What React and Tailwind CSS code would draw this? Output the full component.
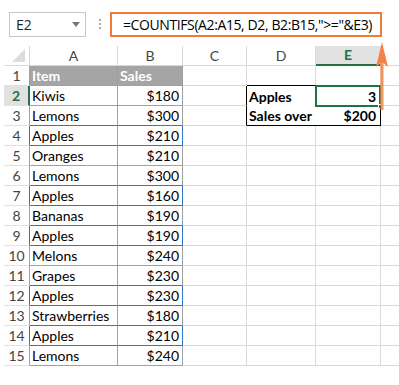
const rows = [
  ["Item", "Sales"],
  ["Kiwis", "$180"],
  ["Lemons", "$300"],
  ["Apples", "$210"],
  ["Oranges", "$210"],
  ["Lemons", "$300"],
  ["Apples", "$160"],
  ["Bananas", "$190"],
  ["Apples", "$190"],
  ["Melons", "$240"],
  ["Grapes", "$230"],
  ["Apples", "$230"],
  ["Strawberries", "$180"],
  ["Apples", "$210"],
  ["Lemons", "$240"],
];

const blueRows = [4, 7, 9, 12, 14];

const GRID = "border-[#d9d9d9]";
const TABLE = "border-[#a0a0a0]";
const BLUE = "border-[#2e75d0]";

const ColHeader = ({ label, width, active }) => (
  <div
    className={`flex h-full shrink-0 items-center justify-center border-r border-[#d9d9d9] ${width} ${
      active
        ? "border-b-2 border-b-[#217346] bg-[#e1e1e1] font-bold text-[#217346]"
        : "border-b border-b-[#d9d9d9] text-[#444]"
    }`}
  >
    {label}
  </div>
);

const SheetRow = ({ index, item, sales }) => {
  const isBlue = blueRows.includes(index);
  const nextBlue = blueRows.includes(index + 1);
  const abBottom = isBlue || nextBlue ? BLUE : TABLE;
  const isHeader = index === 1;

  return (
    <div className="flex h-[20px] whitespace-nowrap">
      <div
        className={`flex w-[26px] shrink-0 items-center justify-center border-b border-b-[#e1e1e1] ${
          index === 2
            ? "border-r-2 border-r-[#217346] bg-[#e1e1e1] font-bold text-[#217346]"
            : `border-r ${isBlue ? "border-r-[#2e75d0]" : "border-r-[#a0a0a0]"} text-[#444]`
        }`}
      >
        {index}
      </div>
      <div
        className={`flex w-[88px] shrink-0 items-end border-b border-r pb-[2px] pl-[2px] ${abBottom} border-r-[#a0a0a0] ${
          isHeader ? "bg-[#a5a5a5] font-bold text-white" : "text-black"
        }`}
      >
        {item}
      </div>
      <div
        className={`flex w-[65px] shrink-0 items-end border-b border-r pb-[2px] pr-[3px] ${abBottom} ${
          isBlue ? "border-r-[#2e75d0]" : "border-r-[#a0a0a0]"
        } ${isHeader ? "justify-start bg-[#a5a5a5] pl-[2px] font-bold text-white" : "justify-end"}`}
      >
        {sales}
      </div>
      <div
        className={`w-[64px] shrink-0 border-b border-r ${GRID} ${
          index === 2 || index === 3 ? "border-r-black" : ""
        }`}
      />
      <div
        className={`flex w-[69px] shrink-0 items-end pb-[2px] pl-[2px] font-bold ${
          index === 1
            ? "border-b border-r border-b-black border-r-[#d9d9d9]"
            : index === 2
            ? ""
            : index === 3
            ? "border-b border-b-black"
            : `border-b border-r ${GRID}`
        }`}
      >
        {index === 2 ? "Apples" : index === 3 ? "Sales over" : ""}
      </div>
      <div
        className={`relative flex w-[65px] shrink-0 items-end justify-end pb-[2px] pr-[4px] font-bold ${
          index === 1
            ? "border-b border-r border-b-black border-r-[#d9d9d9]"
            : index === 2
            ? "border-r border-r-black"
            : index === 3
            ? "border-b border-r border-black"
            : `border-b border-r ${GRID}`
        }`}
      >
        {index === 2 && (
          <>
            <div className="absolute -top-px -left-px -bottom-px right-[-1px] border-2 border-[#217346]" />
            <div className="absolute -bottom-[3px] -right-[3px] h-[5px] w-[5px] border border-white bg-[#217346]" />
          </>
        )}
        {index === 2 ? "3" : index === 3 ? "$200" : ""}
      </div>
      <div className={`w-[40px] shrink-0 border-b ${GRID}`} />
    </div>
  );
};

const App = () => {
  return (
    <div
      className="relative h-[385px] w-[399px] overflow-hidden bg-white text-[14px] leading-none"
      style={{ fontFamily: "Lato, 'Liberation Sans', sans-serif" }}
    >
      <div className="flex h-[46px] items-start pt-[12px]">
        <div className="ml-[9px] flex h-[25px] w-[77px] items-center justify-between border border-[#c6c6c6] pl-[6px] pr-[5px] font-['Open_Sans'] text-[14px] text-[#222]">
          <span>E2</span>
          <span className="h-0 w-0 border-x-[4px] border-t-[5px] border-x-transparent border-t-[#777]" />
        </div>
        <div className="ml-[13px] mt-[7px] flex flex-col gap-[2px]">
          <span className="h-[2px] w-[2px] bg-[#aaa]" />
          <span className="h-[2px] w-[2px] bg-[#aaa]" />
          <span className="h-[2px] w-[2px] bg-[#aaa]" />
        </div>
        <div className="ml-[9px] flex h-[25px] w-[272px] items-center border-2 border-[#f07c3c] pl-[11px] font-['Open_Sans'] text-[14px] tracking-[-0.4px] text-black">
          =COUNTIFS(A2:A15, D2, B2:B15,"&gt;="&amp;E3)
        </div>
      </div>

      <div className="pl-[4px]">
        <div className="flex h-[20px]">
          <div className="relative w-[26px] shrink-0 border-b border-r border-[#d9d9d9]">
            <div className="absolute bottom-[3px] right-[4px] h-0 w-0 border-b-[13px] border-l-[13px] border-b-[#dcdcdc] border-l-transparent" />
          </div>
          <ColHeader label="A" width="w-[88px]" />
          <ColHeader label="B" width="w-[65px]" />
          <ColHeader label="C" width="w-[64px]" />
          <ColHeader label="D" width="w-[69px]" />
          <ColHeader label="E" width="w-[65px]" active />
          <div className="w-[40px] shrink-0 border-b border-[#d9d9d9]" />
        </div>
        {rows.map(([item, sales], i) => (
          <SheetRow key={i} index={i + 1} item={item} sales={sales} />
        ))}
      </div>

      <svg className="absolute left-[370px] top-[38px]" width="24" height="74" viewBox="0 0 24 74">
        <line x1="12" y1="20" x2="12" y2="72" stroke="#f4935a" strokeWidth="3" />
        <path d="M12 4 L6 29 L12 24 L18 29 Z" fill="#f4834a" />
      </svg>
    </div>
  );
};

export default App;
